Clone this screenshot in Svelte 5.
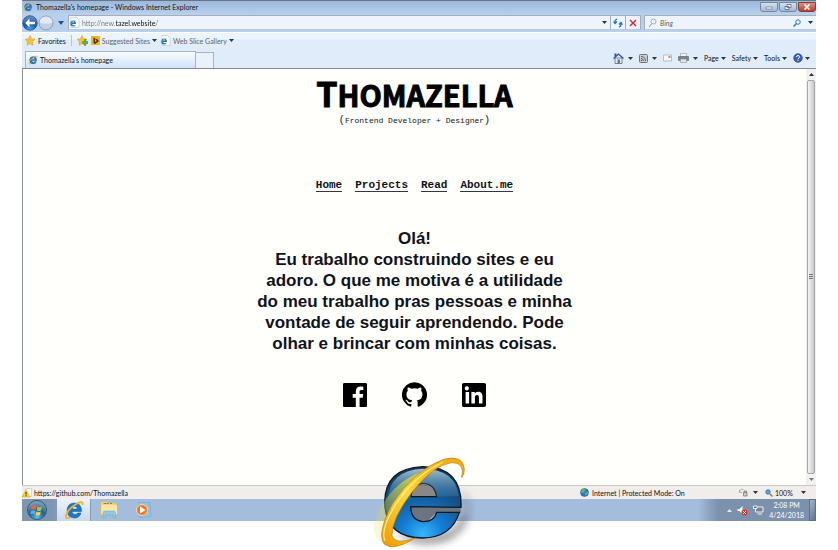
<script>
  let address = $state('http://new.tazel.website/');
  let query = $state('');
  const nav = ['Home', 'Projects', 'Read', 'About.me'];
</script>

{#snippet ie(size)}
  <svg width={size} height={size} viewBox="0 0 20 20" aria-hidden="true">
    <path d="M17.500 11.500H8Q8.300 14.500 11 14.500 12.800 14.500 13.500 13H17Q15.500 18 10.500 18 3 17.500 3 10.500 3.500 3 10.500 3 18 3.500 17.500 11.500zM8 9h5.500q-.5-2.800-2.700-2.800T8 9z" fill="#1c78c8" stroke="#15508f" stroke-width=".5" />
    <path d="M18.500 5Q19.500.5 14 3 4.500 8 2 15q-1 4.500 4 2.500" fill="none" stroke="#efb323" stroke-width="1.800" />
  </svg>
{/snippet}

{#snippet page()}
  <svg width="11" height="11" viewBox="0 0 22 22" aria-hidden="true">
    <path d="M4 1h11l5 5v15H4z" fill="#fff" stroke="#a9b3c0" />
    <path d="M14 14H6.500q.5 2.500 2.500 2.500h4.500q-1.500 2.500-5 2.500-6-.5-6-6 .5-6 6-6T14 14zM6.500 11h4q-.5-2-2-2t-2 2z" fill="#1d77bd" />
    <path d="M14 7Q8 5 3 14" fill="none" stroke="#e4b53b" />
  </svg>
{/snippet}

{#snippet caret()}
  <svg class="caret" width="5" height="3" viewBox="0 0 5 3" aria-hidden="true"><path d="M0 0h5L2.500 3z" fill="#333" /></svg>
{/snippet}

{#snippet star(add)}
  <svg width="11" height="11" viewBox="0 0 22 22" aria-hidden="true">
    <path d="M10 1l3 6.500 7 .8-5.200 5 1.200 7.200-6-3.500L4 20.500l1.200-7L0 8.500l7-1z" fill="#f9c03c" stroke="#dc8d18" />
    {#if add}<path d="M11 13h4V9h3v4h4v4h-4v4h-3v-4h-4z" fill="#57b947" stroke="#3b8a2f" />{/if}
  </svg>
{/snippet}

<div class="screen">
  <section class="window">
    <header class="title">
      {@render ie(10)}
      <span>Thomazella's homepage - Windows Internet Explorer</span>
      <div class="controls">
        <button aria-label="Minimize"><svg width="8" height="6" viewBox="0 0 8 6"><path d="M1 3h6v2H1z" fill="#fff" stroke="#56677d" stroke-width=".6" /></svg></button>
        <button aria-label="Restore"><svg width="8" height="6" viewBox="0 0 8 6"><path d="M3 .5h4v3H3zM1 2.500h4v3H1z" fill="#fff" stroke="#56677d" stroke-width=".8" /></svg></button>
        <button class="close" aria-label="Close"><svg width="8" height="6" viewBox="0 0 8 6"><path d="M1.500.5l5 5m0-5l-5 5" stroke="#fff" stroke-width="1.600" /></svg></button>
      </div>
    </header>

    <div class="nav">
      <button class="round back" aria-label="Back">
        <svg width="16" height="16" viewBox="0 0 32 32">
          <defs>
            <radialGradient id="backFill" cx=".5" cy="1" r="1"><stop offset="0" stop-color="#39b4ee" /><stop offset=".5" stop-color="#1a58ab" /><stop offset="1" stop-color="#7393cc" /></radialGradient>
          </defs>
          <circle cx="16" cy="16" r="14.500" fill="url(#backFill)" stroke="#26467c" stroke-width="1.500" />
          <path d="M15 7l-8.500 9 8.500 9v-6.500h11v-5H15z" fill="#fff" />
        </svg>
      </button>
      <button class="round" aria-label="Forward">
        <svg width="16" height="16" viewBox="0 0 32 32">
          <circle cx="16" cy="16" r="14" fill="#bfd0e4" stroke="#788ca8" stroke-width="1.500" />
          <path d="M3 15a13 12 0 0 1 26 0Q16 20 3 15z" fill="#e2ebf5" />
        </svg>
      </button>
      <button class="history" aria-label="Recent pages"><svg width="6" height="4" viewBox="0 0 6 4"><path d="M0 0h6L3 4z" fill="#1d5382" /></svg></button>
      <label class="box address">
        {@render page()}
        <input aria-label="Address" bind:value={address} />
        {@render caret()}
      </label>
      <button class="box tool" aria-label="Refresh">
        <svg width="10" height="10" viewBox="0 0 20 20"><path d="M8 2Q3 4 4 9m-3-2l3 4 4-4M12 18q5-2 4-7m-4 2l4-4 3 4" fill="none" stroke="#2472bd" stroke-width="2.400" /></svg>
      </button>
      <button class="box tool" aria-label="Stop">
        <svg width="8" height="8" viewBox="0 0 8 8"><path d="M1 1l6 6m0-6L1 7" stroke="#d3262b" stroke-width="1.400" /></svg>
      </button>
      <label class="box search">
        <svg width="9" height="10" viewBox="0 0 18 20"><circle cx="11" cy="7" r="5" fill="#eef6fd" stroke="#7d9bb9" stroke-width="1.500" /><path d="M8 11l-6 7" stroke="#7d9bb9" stroke-width="2" /></svg>
        <input class="query" aria-label="Search" placeholder="Bing" bind:value={query} />
        <svg width="8" height="8" viewBox="0 0 16 16"><circle cx="10" cy="6" r="4.500" fill="none" stroke="#2979c5" stroke-width="2" /><path d="M7 9l-6 6" stroke="#2979c5" stroke-width="3" /></svg>
        {@render caret()}
      </label>
    </div>

    <div class="favorites">
      <button>{@render star(false)}Favorites</button>
      <i class="rule"></i>
      <button aria-label="Add to favorites">{@render star(true)}</button>
      <button class="muted">
        <svg width="9" height="9" viewBox="0 0 18 18"><path d="M0 0h18v18H0z" fill="#f5b41b" /><path d="M5 3l3 1v8l4-2-3-2V5l6 3v3l-7 5-3-2z" fill="#4d3205" /></svg>
        Suggested Sites {@render caret()}
      </button>
      <button class="muted">{@render page()}Web Slice Gallery {@render caret()}</button>
    </div>

    <div class="tabs">
      <button class="tab">{@render ie(10)}Thomazella's homepage</button>
      <button class="new-tab" aria-label="New tab"></button>
      <div class="commands">
        <button aria-label="Home page">
          <svg width="11" height="11" viewBox="0 0 22 22"><path d="M4 10h14v11H4z" fill="#e8edf5" stroke="#51637e" stroke-width="1.500" /><path d="M1 11L11 2l10 9" fill="none" stroke="#344e8c" stroke-width="2.500" /><path d="M3 1h4v6H3z" fill="#324fb1" /><path d="M9 13h5v8H9z" fill="#6c7990" /></svg>
          {@render caret()}
        </button>
        <button aria-label="Feeds">
          <svg width="9" height="9" viewBox="0 0 18 18"><rect x="1" y="1" width="16" height="16" rx="2" fill="#ccc" stroke="#777" stroke-width="2" /><path d="M4 9q5 0 5 5M4 5q9 0 9 9" fill="none" stroke="#666" stroke-width="2" /><circle cx="5" cy="13" r="1.500" fill="#666" /></svg>
          {@render caret()}
        </button>
        <button class="mail" aria-label="Read mail">
          <svg width="9" height="8" viewBox="0 0 18 16"><path d="M1 2h16v12H1z" fill="#f7f8fa" stroke="#a4adba" stroke-width="1.500" /><path d="M11 4h4v4h-4z" fill="#dd7775" /></svg>
        </button>
        <button aria-label="Print">
          <svg width="11" height="10" viewBox="0 0 22 20"><path d="M5 1h12v7H5z" fill="#eef1f5" stroke="#8a8f98" /><path d="M1 7h20v8H1z" fill="#7b828c" stroke="#4f555d" /><path d="M5 12h12v7H5z" fill="#dfe6df" stroke="#7f858c" /></svg>
          {@render caret()}
        </button>
        <button class="word">Page {@render caret()}</button>
        <button class="word">Safety {@render caret()}</button>
        <button class="word">Tools {@render caret()}</button>
        <button class="help" aria-label="Help">
          <svg width="10" height="10" viewBox="0 0 20 20"><circle cx="10" cy="10" r="8.500" fill="#3a5fc4" stroke="#283f86" stroke-width="1.500" /><path d="M7 8q0-3 3-3t3 2.500-3 4v1m0 1.500v2" fill="none" stroke="#fff" stroke-width="2" /></svg>
          {@render caret()}
        </button>
      </div>
    </div>

    <div class="viewport">
      <main>
        <h1>Thomazella</h1>
        <p class="role"><b>(</b>Frontend Developer + Designer<b>)</b></p>
        <nav>
          {#each nav as item}<a href="#top">{item}</a>{/each}
        </nav>
        <h2>Olá!<br />Eu trabalho construindo sites e eu<br />adoro. O que me motiva é a utilidade<br />do meu trabalho pras pessoas e minha<br />vontade de seguir aprendendo. Pode<br />olhar e brincar com minhas coisas.</h2>
        <div class="social">
          <a href="#facebook" aria-label="Facebook"><svg width="24" height="24" viewBox="0 0 24 24"><path d="M22.700 0H1.300C.6 0 0 .6 0 1.300v21.400c0 .7.6 1.300 1.300 1.300H12.800v-9.300H9.700v-3.600h3.100V8.400c0-3.100 1.900-4.800 4.700-4.800 1.300 0 2.500.1 2.800.2V7h-1.900c-1.500 0-1.800.7-1.800 1.800v2.300h3.600l-.5 3.600h-3.100V24h6.100c.7 0 1.300-.6 1.300-1.300V1.300c0-.7-.6-1.300-1.300-1.300z" /></svg></a>
          <a href="https://github.com/Thomazella" aria-label="GitHub"><svg width="25" height="25" viewBox="0 0 24 24"><path d="M12 .3a12 12 0 0 0-3.800 23.400c.6.1.8-.3.8-.6v-2c-3.300.7-4-1.600-4-1.600-.6-1.400-1.400-1.800-1.400-1.800-1-.7.1-.7.1-.7 1.200 0 1.900 1.200 1.900 1.200 1 1.800 2.800 1.300 3.500 1 0-.8.4-1.300.7-1.600-2.700-.3-5.500-1.300-5.500-6 0-1.200.5-2.300 1.300-3.100-.2-.4-.6-1.600 0-3.200 0 0 1-.3 3.400 1.200a11.500 11.500 0 0 1 6 0c2.300-1.500 3.300-1.200 3.300-1.200.6 1.600.2 2.800 0 3.200.9.8 1.300 1.900 1.300 3.200 0 4.600-2.800 5.600-5.500 5.900.5.4.9 1 .9 2.200v3.300c0 .3.1.7.8.6A12 12 0 0 0 12 .3" /></svg></a>
          <a href="#linkedin" aria-label="LinkedIn"><svg width="24" height="24" viewBox="0 0 24 24"><path d="M20.500 20.500h-3.600v-5.600c0-1.300 0-3-1.900-3s-2.100 1.400-2.100 2.900v5.700H9.400V9h3.400v1.600c.5-.9 1.600-1.900 3.400-1.900 3.600 0 4.300 2.400 4.300 5.500v6.300zM5.300 7.400a2.100 2.100 0 1 1 0-4.100 2.100 2.100 0 0 1 0 4.100zm1.800 13.100H3.600V9h3.500v11.500zM22.200 0H1.800C.8 0 0 .8 0 1.700v20.500c0 1 .8 1.800 1.800 1.800h20.400c1 0 1.800-.8 1.800-1.700V1.700C24 .8 23.200 0 22.200 0z" /></svg></a>
        </div>
      </main>
      <div class="scrollbar" aria-hidden="true">
        <svg width="5" height="3" viewBox="0 0 5 3"><path d="M0 3h5L2.500 0z" fill="#333" /></svg>
        <div class="thumb"><i></i></div>
        <svg width="5" height="3" viewBox="0 0 5 3"><path d="M0 0h5L2.500 3z" fill="#777" /></svg>
      </div>
    </div>

    <footer class="status">
      <svg width="10" height="10" viewBox="0 0 20 20"><path d="M7 1h12v16H7z" fill="#fff" stroke="#b9b9b9" /><path d="M8 3l8 15H0z" fill="#fcd526" stroke="#c49a10" /><path d="M8 8v5m0 1.500v2" stroke="#222" stroke-width="2" /></svg>
      <span class="link">https://github.com/Thomazella</span>
      <span class="zone">
        <svg width="9" height="9" viewBox="0 0 18 18"><circle cx="9" cy="9" r="8" fill="#2b78cf" stroke="#1f4f94" /><path d="M4 3q5-2 7 1L8 9l-6 1q0-4 2-7zM11 9l5-1q0 5-4 7-4-3-1-6z" fill="#63bd55" /></svg>
        Internet | Protected Mode: On
      </span>
      <button class="lock" aria-label="Privacy"><svg width="10" height="9" viewBox="0 0 20 18"><path d="M3 8q1-7 8-5m-8 1v5h5" fill="none" stroke="#999" stroke-width="1.500" /><path d="M11 9h7v7h-7zm1 0V6h5v3" fill="#ccc" stroke="#777" stroke-width="1.500" /></svg>{@render caret()}</button>
      <button class="zoom"><svg width="8" height="8" viewBox="0 0 16 16"><circle cx="6" cy="6" r="4.500" fill="#58a4e7" stroke="#2868b0" stroke-width="1.500" /><path d="M10 10l5 5" stroke="#a5743d" stroke-width="3" /></svg>100% {@render caret()}</button>
    </footer>

    <div class="taskbar">
      <button class="start" aria-label="Start">
        <svg width="22" height="22" viewBox="0 0 44 44">
          <defs><radialGradient id="orb" cx=".5" cy=".9" r=".8"><stop offset="0" stop-color="#4ec9ea" /><stop offset=".5" stop-color="#245f99" /><stop offset="1" stop-color="#7b9fb9" /></radialGradient></defs>
          <circle cx="22" cy="22" r="19" fill="url(#orb)" stroke="#34587c" stroke-width="2" />
          <path d="M12 14q5-3 9 0l-1.500 8q-4-3-9 0z" fill="#ee6534" /><path d="M23 15q4 3 9 0l-2 8q-4 2-8.500 0z" fill="#9ccb3c" /><path d="M10 24q5-3 9 0l-1.500 7q-4-3-9 0z" fill="#5aaee6" /><path d="M21 25q4 3 8.500 0l-1.500 7q-4 3-9 0z" fill="#fbcd3a" />
        </svg>
      </button>
      <button class="app active" aria-label="Internet Explorer">{@render ie(20)}</button>
      <button class="app" aria-label="Windows Explorer">
        <svg width="20" height="18" viewBox="0 0 40 36"><path d="M3 4l3-3h10l3 3h16v25H3z" fill="#f1d57e" stroke="#cfae51" /><path d="M5 8h31v18H5z" fill="#f9e7a8" /><path d="M9 5h5m8 0h4" stroke="#4aa052" stroke-width="2" /><path d="M15 5h4" stroke="#d35244" stroke-width="2" /><path d="M8 34V24q0-4 4-4h17q4 0 4 4v10h-5v-6H13v6z" fill="#8ec8ea" stroke="#69a6cc" /></svg>
      </button>
      <button class="app" aria-label="Media Player">
        <svg width="17" height="16" viewBox="0 0 34 32"><path d="M7 1h23l2 28-22 2z" fill="#8cc6e6" stroke="#6ba7ce" /><circle cx="14" cy="16" r="11" fill="#f07a22" stroke="#fbd7b1" stroke-width="2" /><path d="M10 9l11 7-11 7z" fill="#fff" /></svg>
      </button>
      <div class="tray">
        <svg width="5" height="3" viewBox="0 0 5 3"><path d="M0 3h5L2.500 0z" fill="#e8eef5" /></svg>
        <svg width="11" height="11" viewBox="0 0 22 22"><path d="M1 8h4l6-6v16l-6-6H1z" fill="#f4f6f8" /><circle cx="15" cy="15" r="6" fill="#de3c36" /><path d="M12 12l6 6m0-6l-6 6" stroke="#fff" stroke-width="1.800" /></svg>
        <svg width="11" height="10" viewBox="0 0 22 20"><path d="M5 4h15v10H5z" fill="#73859a" stroke="#edf1f5" stroke-width="2" /><path d="M1 2h7v5H1zM9 18h9" fill="#566c85" stroke="#edf1f5" stroke-width="2" /></svg>
        <time datetime="2018-04-24T14:08">2:08 PM<br />4/24/2018</time>
        <button class="desktop" aria-label="Show desktop"></button>
      </div>
    </div>
  </section>

  <svg class="logo" width="110" height="100" viewBox="0 0 330 300" aria-hidden="true">
    <defs>
      <radialGradient id="body" cx=".5" cy=".95" r=".9"><stop offset="0" stop-color="#38b7fb" /><stop offset=".3" stop-color="#147ed5" /><stop offset=".65" stop-color="#15558f" /><stop offset="1" stop-color="#16395b" /></radialGradient>
      <linearGradient id="gloss" x1="0" y1="0" x2="0" y2="1"><stop offset="0" stop-color="#c4e1ed" stop-opacity=".8" /><stop offset="1" stop-color="#3386bd" stop-opacity=".15" /></linearGradient>
      <linearGradient id="gold" x1="0" y1="1" x2="1" y2="0"><stop offset="0" stop-color="#ed9b05" /><stop offset=".45" stop-color="#ffd83a" /><stop offset=".7" stop-color="#f7ba18" /><stop offset="1" stop-color="#eeaa16" /></linearGradient>
      <linearGradient id="trail" x1="0" y1="1" x2="1" y2="0"><stop offset="0" stop-color="#e5da46" stop-opacity=".1" /><stop offset="1" stop-color="#d9da36" stop-opacity=".85" /></linearGradient>
      <filter id="soft" x="-30%" y="-30%" width="160%" height="160%"><feGaussianBlur stdDeviation="12" /></filter>
    </defs>
    <path d="M75 235Q150 285 250 240L290 185 275 120 290 150Q310 230 230 270 120 300 75 235z" fill="#222" opacity=".6" filter="url(#soft)" />
    <path d="M122 98h80v45h-80zM122 170h150v20h-75l-30 30-45-15z" fill="#444" opacity=".6" />
    <path fill-rule="evenodd" d="M273 172Q278 50 158 50 44 55 44 158 48 264 158 264 245 262 268 187H200Q192 215 160 215 123 212 122 170zM123 140Q126 100 160 100T200 140z" fill="url(#body)" stroke="#0c1722" stroke-width="4" />
    <path fill-rule="evenodd" d="M266 138Q258 58 158 56 60 60 52 150q35 15 70 0l1-10q3-40 37-40t40 40z" fill="url(#gloss)" />
    <path d="M167 65Q100 95 62 180 40 225 45 280 0 270 14 220 45 115 138 72z" fill="url(#trail)" />
    <path d="M275 83Q286 36 244 38 190 46 128 124 65 205 66 257 75 286 136 264 68 306 42 281 20 250 67 162 133 60 220 28 279 13 283 57q0 18-8 26z" fill="url(#gold)" stroke="#bd7c08" stroke-width="2" />
    <path d="M45 272Q29 240 78 162 135 75 218 37" fill="none" stroke="#fff4a6" stroke-width="4" opacity=".8" />
  </svg>
</div>

<style>
  :global(body) { margin: 0; background: #fff; }
  .screen { position: relative; min-height: 550px; padding: 0 22px; box-sizing: border-box; font: 7px/10px Lato, "Open Sans", sans-serif; color: #111; }
  button { display: flex; align-items: center; gap: 2px; margin: 0; padding: 0; border: 0; background: none; color: inherit; font: inherit; white-space: nowrap; }
  svg { display: block; flex: none; }
  input { min-width: 0; flex: 1; border: 0; padding: 0; outline: 0; background: none; font: inherit; }
  .window { background: #e0ecf9; }
  .title { display: flex; align-items: center; gap: 3px; height: 13px; box-sizing: border-box; padding-left: 1px; border-top: 1px solid #6b7482; background: linear-gradient(#9cb8da, #b4cdea); }
  .controls { display: flex; gap: 1px; margin-left: auto; }
  .controls button { justify-content: center; width: 18px; height: 10px; border: 1px solid #7188a3; border-radius: 0 0 3px 3px; box-sizing: border-box; background: linear-gradient(#d3e1ef, #a4bad2); }
  .controls .close { border-color: #87413b; background: linear-gradient(#dd9083, #bd3d28); }
  .nav { display: flex; align-items: center; height: 19px; background: #b9d0ec; }
  .round { width: 16px; }
  .history { justify-content: center; width: 14px; }
  .box { display: flex; align-items: center; height: 15px; box-sizing: border-box; border: 1px solid #a3afbc; border-bottom-color: #bfc9d0; background: #edf4fc; }
  .address { flex: 1; gap: 2px; padding: 0 3px 0 0; }
  .address input { color: transparent; background: linear-gradient(90deg, #777 34px, #111 34px, #111 74px, #777 74px); background-clip: text; -webkit-background-clip: text; }
  .tool { justify-content: center; width: 15px; border-left: 0; }
  .search { width: 172px; margin-left: 3px; padding: 0 3px; gap: 3px; border-right: 0; }
  .search .caret { margin-left: 4px; }
  .query::placeholder { color: #666; font-style: italic; opacity: 1; }
  .favorites { display: flex; align-items: center; height: 17px; padding-left: 3px; gap: 3px; background: linear-gradient(#fff 1px, #ecf4fc 1px, #ecf4fc 7px, #e0ecf9 8px); }
  .rule { width: 1px; height: 11px; margin: 0 2px; background: #b9c5d4; }
  .muted { color: #666; }
  .tabs { display: flex; align-items: flex-end; height: 19px; padding-left: 3px; }
  .tab { width: 171px; height: 17px; padding-left: 2px; box-sizing: border-box; border: 1px solid #a4b4c8; border-bottom: 0; background: linear-gradient(#fafcff, #cfe1f9); }
  .new-tab { width: 18px; height: 16px; box-sizing: border-box; border: 1px solid #a4b4c8; border-left: 0; border-bottom: 0; background: #e9f1fb; }
  .commands { display: flex; align-items: center; height: 20px; gap: 6px; margin-left: auto; padding-right: 6px; }
  .commands button { gap: 4px; }
  .commands .word, .commands .help { gap: 2px; }
  .viewport { display: flex; height: 417px; background: #fffffb; border-left: 1px solid #8a919a; border-top: 1px solid #8a8a8a; box-sizing: border-box; }
  main { flex: 1; text-align: center; color: #10131c; }
  h1 { margin: 5px 0 0; font: bold 29px/38px "Noto Sans CJK JP", Roboto, sans-serif; color: #000; text-transform: uppercase; -webkit-text-stroke: 1px #000; }
  h1::first-letter { font-size: 34px; }
  .role { display: flex; justify-content: center; align-items: center; margin: 2px 0 0; font: 8px/12px "Liberation Mono", monospace; }
  .role b { font-size: 10px; font-weight: normal; }
  nav { display: flex; justify-content: center; gap: 13px; margin-top: 52px; font: bold 11px/12px "Liberation Mono", monospace; }
  nav a { color: inherit; text-decoration: none; border-bottom: 1px solid #333745; }
  h2 { margin: 36px 0 0; font: bold 17px/21px "Liberation Sans", sans-serif; }
  .social { display: flex; justify-content: center; align-items: center; gap: 35px; margin-top: 28px; }
  .scrollbar { display: flex; flex-direction: column; align-items: center; gap: 4px; width: 10px; padding: 4px 0; box-sizing: border-box; background: #f1f1f1; }
  .thumb { display: flex; align-items: center; justify-content: center; flex: 1; width: 8px; border: 1px solid #a5a5aa; border-radius: 2px; box-sizing: border-box; background: linear-gradient(90deg, #f5f5f6, #c7c8cc); }
  .thumb i { width: 4px; height: 6px; background: repeating-linear-gradient(#777 0 1px, #ddd 1px 2px); }
  .status { display: flex; align-items: center; height: 14px; box-sizing: border-box; border-top: 1px solid #c8c8c8; background: #f0edec; }
  .link { margin-left: 2px; }
  .zone { display: flex; align-items: center; gap: 3px; width: 158px; margin-left: auto; }
  .lock { gap: 5px; width: 27px; }
  .zoom { gap: 2px; width: 51px; }
  .zoom .caret { margin-left: 6px; }
  .taskbar { display: flex; align-items: center; height: 22px; background: linear-gradient(90deg, #7f96b2 30px, #a5bddc 70px calc(100% - 118px), #7b91ac calc(100% - 98px)); }
  .start { justify-content: center; width: 34px; padding-right: 4px; box-sizing: border-box; }
  .app { justify-content: center; width: 35px; height: 22px; }
  .active { border: 1px solid #8399b4; border-width: 0 1px; box-sizing: border-box; background: linear-gradient(#edf3fa, #cbd9ea); }
  .tray { display: flex; align-items: center; gap: 5px; height: 22px; margin-left: auto; color: #fff; text-align: center; }
  .desktop { width: 7px; height: 22px; border: 1px solid #5b708b; box-sizing: border-box; background: linear-gradient(120deg, #a4b6ca, #5d738e); }
  .logo { position: absolute; top: 450px; left: calc(50% - 49px); pointer-events: none; }
</style>
